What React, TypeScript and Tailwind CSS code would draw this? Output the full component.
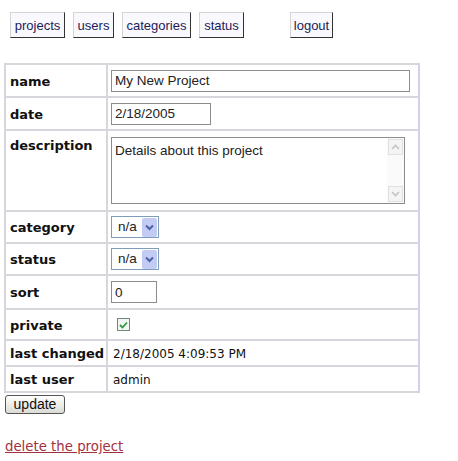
const navItems = [
  { label: "projects", w: "w-[55px]" },
  { label: "users", w: "w-[41px]" },
  { label: "categories", w: "w-[69px]" },
  { label: "status", w: "w-[45px]" },
];

function NavBox({ label, w }: { label: string; w: string }) {
  return (
    <a className={`${w} flex h-[26px] items-center justify-center border border-t-[#d4d4d4] border-l-[#d4d4d4] border-r-[#333] border-b-[#333] bg-[#f9f9fd] pt-[1px] text-[13px] text-[#1c1c5a] cursor-pointer`}>
      {label}
    </a>
  );
}

function Select() {
  return (
    <div className="flex h-[22px] w-[48px] items-center border border-[#7f9db9] bg-white pl-[6px] pr-[1px] font-['Liberation_Sans',sans-serif] text-[13.5px] text-[#222]">
      <span className="flex-1">n/a</span>
      <span className="flex h-[19px] w-[15px] items-center justify-center rounded-[2px] bg-[#c1cbf3]">
        <svg width="9" height="7" viewBox="0 0 9 7">
          <path d="M1 1.5 L4.5 5 L8 1.5" fill="none" stroke="#4d61a8" strokeWidth="2" />
        </svg>
      </span>
    </div>
  );
}

const label = "flex items-center border-r-2 border-b-2 border-[#d6d6dc] pl-[4px] pt-[2px] font-['DejaVu_Sans',sans-serif] text-[13px] font-bold text-[#111]";
const value = "flex items-center border-r-2 border-b-2 border-[#d6d6dc] border-r-[#cfcfee] pl-[3px]";
const input = "h-[22px] border border-[#8c8c8c] bg-white px-[3px] font-['Liberation_Sans',sans-serif] text-[13.5px] text-[#222] outline-none";

export default function App() {
  return (
    <div className="min-h-[461px] bg-white font-['Liberation_Sans',sans-serif]">
      <div className="flex pt-[12px] pl-[10px]">
        <div className="flex gap-[8px]">
          {navItems.map((n) => <NavBox key={n.label} label={n.label} w={n.w} />)}
        </div>
        <div className="ml-[46px]">
          <NavBox label="logout" w="w-[43px]" />
        </div>
      </div>

      <div className="ml-[4px] mt-[25px] grid w-[416px] grid-cols-[102px_312px] border-l-2 border-t-2 border-[#d6d6dc]">
        <div className={`${label} h-[33px]`}>name</div>
        <div className={`${value} h-[33px]`}>
          <input className={`${input} w-[299px]`} defaultValue="My New Project" />
        </div>

        <div className={`${label} h-[33px]`}>date</div>
        <div className={`${value} h-[33px]`}>
          <input className={`${input} w-[100px]`} defaultValue="2/18/2005" />
        </div>

        <div className={`${label} h-[81px] !items-start !pt-[5px]`}>description</div>
        <div className={`${value} h-[81px]`}>
          <div className="flex h-[67px] w-[294px] border border-[#8c8c8c] bg-white">
            <div className="flex-1 px-[3px] pt-[3px] text-[13.5px] text-[#222]">Details about this project</div>
            <div className="flex w-[17px] flex-col justify-between bg-[#fafafa] p-[1px]">
              <div className="flex h-[16px] items-center justify-center border border-[#e0e0e0] bg-[#f4f4f4]">
                <svg width="9" height="6" viewBox="0 0 9 6"><path d="M1 5 L4.5 1.5 L8 5" fill="none" stroke="#c4c4c4" strokeWidth="1.6" /></svg>
              </div>
              <div className="flex h-[16px] items-center justify-center border border-[#e0e0e0] bg-[#f4f4f4]">
                <svg width="9" height="6" viewBox="0 0 9 6"><path d="M1 1 L4.5 4.5 L8 1" fill="none" stroke="#c4c4c4" strokeWidth="1.6" /></svg>
              </div>
            </div>
          </div>
        </div>

        <div className={`${label} h-[32px]`}>category</div>
        <div className={`${value} h-[32px]`}><Select /></div>

        <div className={`${label} h-[32px]`}>status</div>
        <div className={`${value} h-[32px]`}><Select /></div>

        <div className={`${label} h-[34px]`}>sort</div>
        <div className={`${value} h-[34px]`}>
          <input className={`${input} w-[46px]`} defaultValue="0" />
        </div>

        <div className={`${label} h-[31px]`}>private</div>
        <div className={`${value} h-[31px] pl-[9px]`}>
          <span className="flex h-[13px] w-[13px] items-center justify-center border border-[#6f8a7a] bg-[#f2f6f2]">
            <svg width="9" height="8" viewBox="0 0 9 8"><path d="M1 4 L3.5 6.5 L8 1.5" fill="none" stroke="#2e9a3e" strokeWidth="1.8" /></svg>
          </span>
        </div>

        <div className={`${label} h-[26px]`}>last changed</div>
        <div className={`${value} h-[26px] pl-[5px] pt-[1px] font-['DejaVu_Sans',sans-serif] text-[12px] text-[#111]`}>2/18/2005 4:09:53 PM</div>

        <div className={`${label} h-[26px]`}>last user</div>
        <div className={`${value} h-[26px] pl-[5px] pt-[1px] font-['DejaVu_Sans',sans-serif] text-[12px] text-[#111]`}>admin</div>
      </div>

      <button className="ml-[5px] mt-[2px] flex h-[19px] w-[60px] items-center justify-center rounded-[3px] border border-[#555] bg-gradient-to-b from-white to-[#dcdcd6] text-[14px] text-[#111] cursor-pointer">
        update
      </button>

      <a className="ml-[5px] mt-[23px] block font-['DejaVu_Sans',sans-serif] text-[13.3px] text-[#a3303f] underline cursor-pointer">
        delete the project
      </a>
    </div>
  );
}
